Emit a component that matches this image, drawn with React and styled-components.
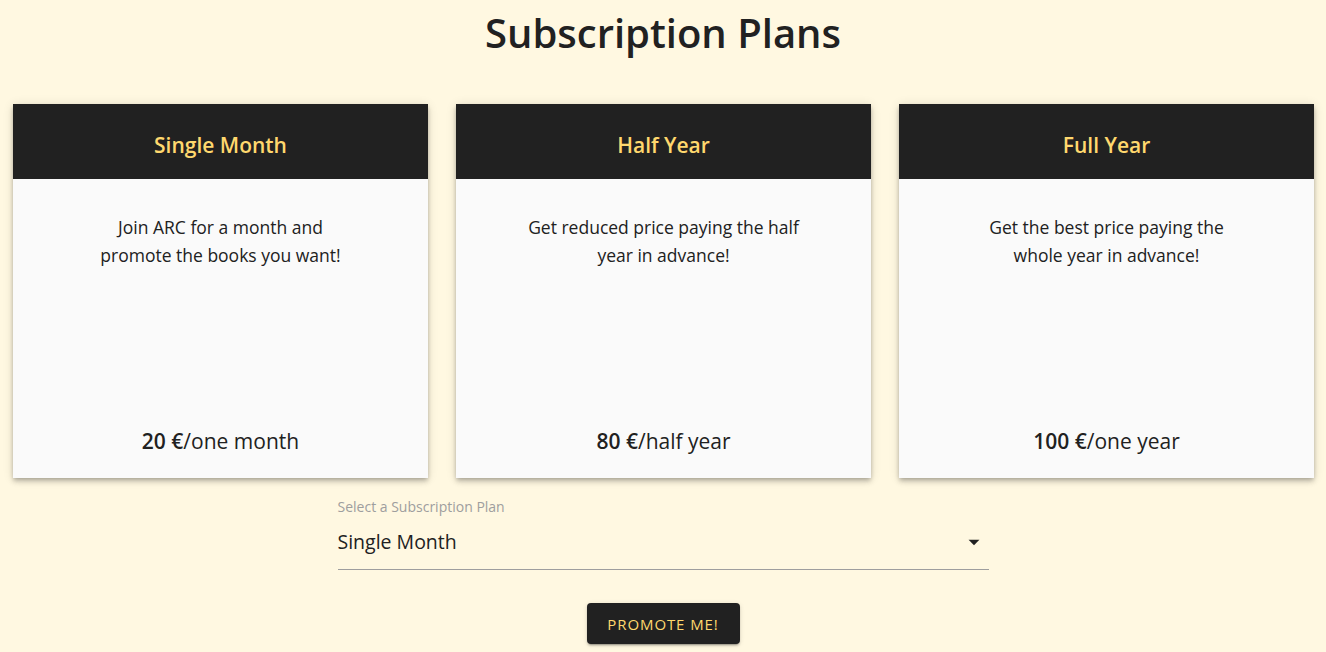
import React, { useState } from "react";
import styled, { createGlobalStyle } from "styled-components";

const GlobalStyle = createGlobalStyle`
  body {
    margin: 0;
    background: #fff8e1;
    font-family: "Open Sans", "Noto Sans", "Liberation Sans", sans-serif;
    color: #212121;
  }
`;

const Page = styled.div`
  display: flex;
  flex-direction: column;
  align-items: center;
  min-height: 652px;
`;

const Title = styled.h1`
  margin: 6px 0 0;
  font-size: 40px;
  font-weight: 600;
  line-height: 54px;
  color: #212121;
`;

const Cards = styled.div`
  display: flex;
  gap: 28px;
  width: 100%;
  box-sizing: border-box;
  padding: 0 12px 0 13px;
  margin-top: 44px;
`;

const Card = styled.div`
  flex: 1;
  height: 374px;
  display: flex;
  flex-direction: column;
  background: #fafafa;
  box-shadow: 0 2px 4px -1px rgba(0, 0, 0, 0.2), 0 4px 5px 0 rgba(0, 0, 0, 0.14),
    0 1px 10px 0 rgba(0, 0, 0, 0.12);
`;

const CardHeader = styled.div`
  height: 75px;
  display: flex;
  align-items: center;
  justify-content: center;
  background: #212121;
  color: #ffd86e;
  font-size: 21px;
  font-weight: 600;
  padding-top: 6px;
  box-sizing: border-box;
`;

const Description = styled.p`
  margin: 34px auto 0;
  width: 277px;
  text-align: center;
  font-size: 17.5px;
  line-height: 28px;
  color: #212121;
`;

const Price = styled.div`
  margin-top: auto;
  margin-bottom: 23px;
  text-align: center;
  font-size: 21px;
  color: #212121;

  b {
    font-weight: 600;
  }
`;

const Field = styled.div`
  width: 651px;
  margin-top: 20px;
  display: flex;
  flex-direction: column;
`;

const Label = styled.label`
  font-size: 14px;
  color: #9e9e9e;
  line-height: 18px;
`;

const SelectRow = styled.div`
  display: flex;
  align-items: center;
  justify-content: space-between;
  height: 54px;
  box-sizing: border-box;
  padding-bottom: 2px;
  border-bottom: 1px solid #9e9e9e;
  font-size: 19.5px;
  color: #212121;
`;

const Arrow = styled.svg`
  width: 26px;
  height: 26px;
  margin-right: 2px;
  fill: #212121;
`;

const Button = styled.button`
  margin-top: 33px;
  width: 153px;
  height: 41px;
  border: none;
  border-radius: 4px;
  background: #212121;
  color: #ffd86e;
  font-family: inherit;
  font-size: 15px;
  letter-spacing: 0.9px;
  text-transform: uppercase;
  cursor: pointer;
  box-shadow: 0 3px 1px -2px rgba(0, 0, 0, 0.2), 0 2px 2px 0 rgba(0, 0, 0, 0.14),
    0 1px 5px 0 rgba(0, 0, 0, 0.12);
`;

const plans = [
  {
    name: "Single Month",
    text: "Join ARC for a month and promote the books you want!",
    price: "20 €",
    period: "one month",
  },
  {
    name: "Half Year",
    text: "Get reduced price paying the half year in advance!",
    price: "80 €",
    period: "half year",
  },
  {
    name: "Full Year",
    text: "Get the best price paying the whole year in advance!",
    price: "100 €",
    period: "one year",
  },
];

export default function App() {
  const [plan] = useState("Single Month");

  return (
    <Page>
      <GlobalStyle />
      <Title>Subscription Plans</Title>

      <Cards>
        {plans.map((p) => (
          <Card key={p.name}>
            <CardHeader>{p.name}</CardHeader>
            <Description>{p.text}</Description>
            <Price>
              <b>{p.price}</b>/{p.period}
            </Price>
          </Card>
        ))}
      </Cards>

      <Field>
        <Label>Select a Subscription Plan</Label>
        <SelectRow>
          {plan}
          <Arrow viewBox="0 0 24 24">
            <path d="M7 10l5 5 5-5z" />
          </Arrow>
        </SelectRow>
      </Field>

      <Button>Promote me!</Button>
    </Page>
  );
}
